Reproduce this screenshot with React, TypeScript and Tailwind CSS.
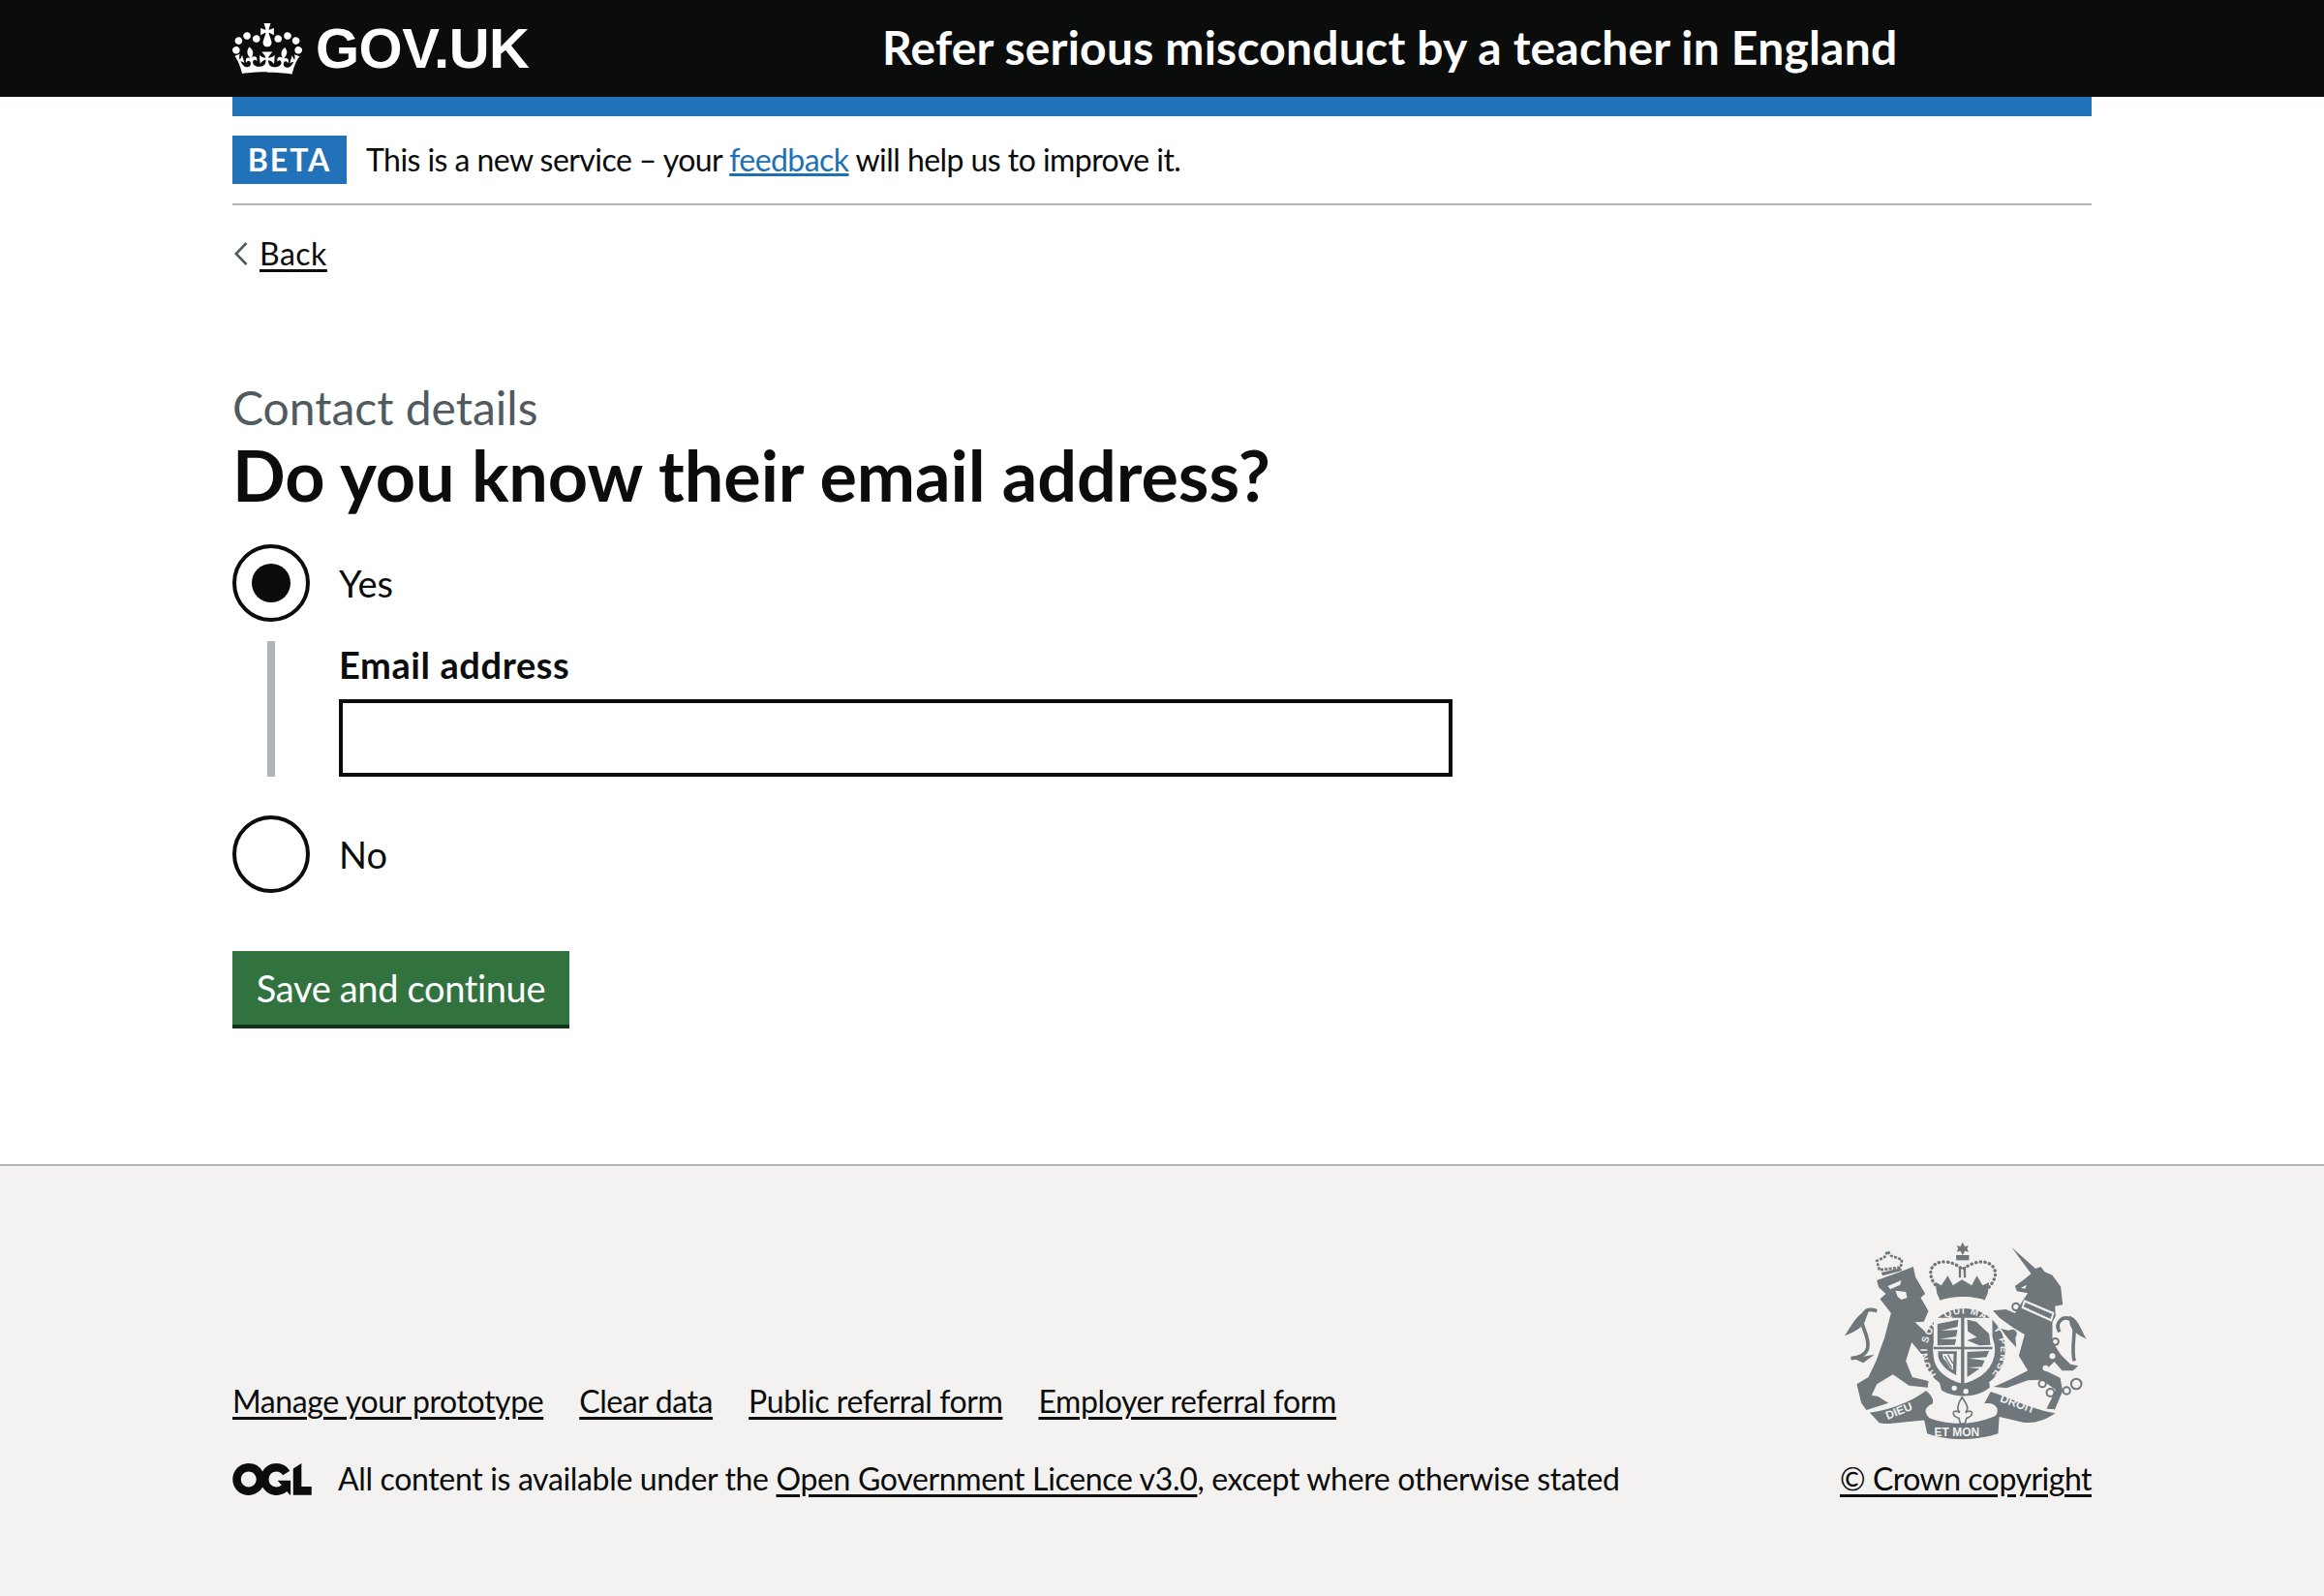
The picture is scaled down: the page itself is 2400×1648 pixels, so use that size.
const font = "font-['Lato',sans-serif]"

// ── Logos ─────────────────────────────────────────────────────────────────────
function Crown() {
  return (
    <svg viewBox="0 0 132 97" className="h-[53px] w-[72px] text-white" fill="currentColor">
      <path
        fillRule="evenodd"
        d="M25 30.2c3.5 1.5 7.7-.2 9.1-3.7 1.5-3.6-.2-7.8-3.9-9.2-3.6-1.4-7.6.3-9.1 3.9-1.4 3.5.3 7.5 3.9 9zM9 39.5c3.6 1.5 7.8-.2 9.2-3.7 1.5-3.6-.2-7.8-3.9-9.1-3.6-1.5-7.6.2-9.1 3.8-1.4 3.5.3 7.5 3.8 9zM4.4 57.2c3.5 1.5 7.7-.2 9.1-3.8 1.5-3.6-.2-7.7-3.9-9.1-3.5-1.5-7.6.3-9.1 3.8-1.4 3.5.3 7.6 3.9 9.1zm38.3-21.4c3.5 1.5 7.7-.2 9.1-3.8 1.5-3.6-.2-7.7-3.9-9.1-3.6-1.5-7.6.3-9.1 3.8-1.3 3.6.4 7.7 3.9 9.1zm64.4-5.6c-3.6 1.5-7.8-.2-9.1-3.7-1.5-3.6.2-7.8 3.8-9.2 3.6-1.4 7.7.3 9.2 3.9 1.3 3.5-.4 7.5-3.9 9zm15.9 9.3c-3.6 1.5-7.7-.2-9.1-3.7-1.5-3.6.2-7.8 3.7-9.1 3.6-1.5 7.7.2 9.2 3.8 1.5 3.5-.3 7.5-3.8 9zm4.7 17.7c-3.6 1.5-7.8-.2-9.2-3.8-1.5-3.6.2-7.7 3.9-9.1 3.6-1.5 7.7.3 9.2 3.8 1.3 3.5-.4 7.6-3.9 9.1zM89.3 35.8c-3.6 1.5-7.8-.2-9.2-3.8-1.4-3.6.2-7.7 3.9-9.1 3.6-1.5 7.7.3 9.2 3.8 1.4 3.6-.3 7.7-3.9 9.1zM69.7 17.7l8.9 4.7V9.3l-8.9 2.8c-.2-.3-.5-.6-.9-.9L72.4 0H59.6l3.6 11.2c-.3.3-.6.5-.9.9l-8.8-2.8v13.1l8.8-4.7c.3.3.6.7.9.9l-5 15.4v.1c-.2.8-.4 1.6-.4 2.4 0 4.1 3.1 7.5 7 8.1h.2c.3 0 .7.1 1 .1.4 0 .7 0 1-.1h.2c4-.6 7.1-4.1 7.1-8.1 0-.8-.1-1.7-.4-2.4V34l-5.1-15.4c.4-.2.7-.6 1-.9zM66 92.8c16.9 0 32.8 1.1 47.1 3.2 4-16.9 8.9-26.7 14-33.5l-9.6-3.4c1 4.9 1.1 7.2 0 10.2-1.5-1.4-3-4.3-4.2-8.7L108.6 76c2.8-2 5-3.2 7.5-3.3-4.4 9.4-10 11.9-13.6 11.2-4.3-.8-6.3-4.6-5.6-7.9 1-4.7 5.7-5.9 8-.5 4.3-8.7-3-11.4-7.6-8.8 7.1-7.2 7.9-13.5 2.1-21.1-8 6.1-8.1 12.3-4.5 20.8-4.7-5.4-12.1-2.5-9.5 6.2 3.4-5.2 7.9-2 7.2 3.1-.6 4.3-6.4 7.8-13.5 7.2-10.3-.9-10.9-8-11.2-13 2.5-.5 7.1 1.8 11 7.3L80.2 60c-4.1 4.4-8 5.3-12.3 5.4 1.4-4.4 8-11.6 8-11.6H55.5s6.4 7.2 7.9 11.6c-4.2-.1-8-1-12.3-5.4l1.4 16.4c3.9-5.5 8.5-7.7 10.9-7.3-.3 5-.7 12.1-11 13-7.2.6-12.9-2.9-13.5-7.2-.7-5 3.8-8.3 7.1-3.1 2.7-8.7-4.6-11.6-9.4-6.2 3.7-8.5 3.6-14.7-4.6-20.8-5.8 7.6-5 13.9 2.2 21.1-4.7-2.6-11.9.1-7.7 8.8 2.3-5.5 7.1-4.2 8.1.5.7 3.3-1.3 7.1-5.7 7.9-3.5.7-9-1.8-13.5-11.2 2.5.1 4.7 1.3 7.5 3.3l-4.7-15.4c-1.2 4.4-2.7 7.2-4.3 8.7-1.1-3-.9-5.3 0-10.2l-9.5 3.4c5 6.9 9.9 16.7 14 33.5 14.8-2.1 30.8-3.2 47.7-3.2z"
      />
    </svg>
  )
}

function OglLogo() {
  return (
    <svg viewBox="0 0 483.2 195.7" className="h-[33px] w-[82px] shrink-0 text-[#0b0c0c]" fill="currentColor">
      <path d="M421.5 142.8V.1l-50.7 32.3v161.1h112.4v-50.7zm-122.3-9.6A47.12 47.12 0 0 1 221 97.8c0-26 21.1-47.1 47.1-47.1 16.7 0 31.4 8.7 39.7 21.8l42.7-27.2A97.63 97.63 0 0 0 268.1 0c-36.5 0-68.3 20.1-85.1 49.7A98 98 0 0 0 97.8 0C43.9 0 0 43.9 0 97.8s43.9 97.8 97.8 97.8c36.5 0 68.3-20.1 85.1-49.7a97.76 97.76 0 0 0 149.6 25.4l19.4 22.2h3v-87.8h-80l24.3 27.5zM97.8 145c-26 0-47.1-21.1-47.1-47.1s21.1-47.1 47.1-47.1 47.2 21 47.2 47S123.8 145 97.8 145" />
    </svg>
  )
}

// Royal arms, drawn in the coordinates of a 900px square around the crest
function Crest() {
  const ink = '#6f777b'
  const bg = '#f3f2f1'
  return (
    <svg viewBox="70 70 755 615" className="mr-[4px] h-[205px] w-[252px]" fill={ink}>
      {/* lion */}
      <path d="M172 190 L240 165 L285 148 L292 180 L322 232 L308 244 L332 285 L318 318 L290 320 L325 352 L342 392 L346 430 L312 420 L280 382 L262 440 L282 490 L332 502 L330 522 L272 516 L222 482 L172 512 L156 546 L176 550 L208 570 L140 592 L124 570 L110 512 L146 490 L170 440 L196 368 L216 292 L182 248 L200 232 L178 212 Z" />
      <path d="M206 208 L248 190 L244 204 L214 218 Z M230 222 L262 226 L266 244 L248 250 L236 240 Z" fill={bg} />
      {/* lion tail */}
      <path d="M172 285 C130 270 118 305 132 340 C150 385 158 425 92 432" fill="none" stroke={ink} strokeWidth="11" />
      <path d="M148 282 C110 290 92 335 72 362 C100 350 125 340 135 318 Z M90 428 L130 446 L165 420 L130 426 Z" />
      {/* lion crown */}
      <path d="M180 158 L172 130 L196 118 L206 100 L216 114 L250 126 L246 150 Z" fill="none" stroke={ink} strokeWidth="8" strokeDasharray="9 4" />
      <path d="M186 166 L246 152 L250 160 L190 176 Z" />

      {/* crown */}
      <path d="M438 72 L445 86 L456 82 L452 92 L456 102 L445 99 L438 112 L431 99 L420 102 L424 92 L420 82 L431 86 Z" />
      <path d="M418 112 H458 V128 H418 Z" />
      <path
        d="M362 215 C320 170 340 130 385 133 C410 135 425 146 438 156 C452 146 470 135 492 133 C535 130 560 170 516 215"
        fill="none"
        stroke={ink}
        strokeWidth="10"
        strokeDasharray="1 13"
        strokeLinecap="round"
      />
      <path d="M426 148 H433 V182 H426 Z M441 148 H448 V182 H441 Z" />
      <path d="M358 230 L354 196 L372 206 L392 176 L408 206 L436 188 L466 206 L482 176 L500 206 L520 196 L516 230 L506 252 C460 238 414 238 368 252 Z" />
      <path d="M374 250 C415 238 462 238 504 250 L500 270 C460 256 416 256 376 270 Z" fill={bg} />

      {/* garter and shield */}
      <circle cx="442" cy="405" r="128" />
      <circle cx="442" cy="405" r="96" fill={bg} />
      <path d="M348 306 H530 V420 C530 468 486 500 438 510 C392 500 348 468 348 420 Z" fill={bg} />
      <path d="M433 300 H443 V512 H433 Z M348 396 H530 V404 H348 Z" />
      <path d="M360 325 L425 312 L422 334 L372 346 L422 344 L418 364 L366 372 L418 372 L414 390 L360 392 Z" />
      <path d="M452 312 L480 318 L520 356 L524 390 L490 392 L452 376 L482 366 L454 348 Z" />
      <path d="M452 412 L520 408 L512 428 L456 432 L506 438 L498 458 L454 460 L490 464 L452 490 Z" />
      <path d="M362 410 H420 L418 484 C388 470 366 448 362 425 Z" />
      <path d="M376 418 L410 418 L408 468 C392 458 380 440 376 425 Z" fill={bg} />
      <path d="M382 424 L404 462 M392 420 L408 448 M380 436 L396 458" stroke={ink} strokeWidth="4" fill="none" />
      <defs>
        <path id="garter" d="M 356 482 A 114 114 0 1 1 528 482" />
      </defs>
      <text fontFamily="'Liberation Sans', sans-serif" fontWeight="700" fontSize="30" fill={bg} textLength="520">
        <textPath href="#garter">HONI SOIT QUI MAL Y PENSE</textPath>
      </text>
      <path d="M366 505 C410 535 480 535 520 505 L522 522 C480 556 410 556 372 530 Z" />
      <circle cx="412" cy="524" r="8" fill={bg} />
      <circle cx="448" cy="534" r="8" fill={bg} />

      {/* unicorn */}
      <path d="M590 88 L664 154 L680 148 L692 164 L716 174 L742 210 L748 266 L724 270 L726 300 L716 320 L716 380 L742 420 L772 450 L796 455 L780 470 L746 470 L722 442 L694 470 L740 492 L748 532 L724 590 L698 588 L726 530 L684 498 L640 500 L574 524 L534 520 L580 500 L640 470 L612 424 L630 358 L596 338 L552 306 L532 284 L572 280 L600 292 L626 250 L640 230 L606 224 L600 208 L628 188 L650 170 Z" />
      <path d="M628 250 L722 290 L714 318 L620 276 Z" fill={bg} />
      <path d="M632 258 L716 294 L710 310 L626 272 Z" strokeDasharray="5 4" stroke={bg} strokeWidth="2" />
      <path d="M556 340 L600 350 L604 398 L580 372 Z" />
      <path d="M738 350 C722 320 748 300 770 310 C800 325 770 390 784 440" fill="none" stroke={ink} strokeWidth="11" />
      <path d="M768 300 C795 305 805 345 822 372 C795 360 775 345 770 325 Z" />
      <g fill="none" stroke={ink} strokeWidth="6">
        <circle cx="603" cy="272" r="11" />
        <circle cx="592" cy="356" r="11" />
        <circle cx="725" cy="380" r="10" />
        <circle cx="685" cy="510" r="11" />
        <circle cx="710" cy="538" r="12" />
        <circle cx="760" cy="532" r="11" />
        <circle cx="790" cy="511" r="16" />
      </g>
      <circle cx="716" cy="425" r="9" fill={bg} />
      <circle cx="695" cy="462" r="9" fill={bg} />
      <path d="M618 214 L636 204 L632 216 Z" fill={bg} />

      {/* motto ribbon */}
      <path d="M150 600 C220 590 270 570 325 532 C340 545 350 560 345 572 C315 585 318 605 342 622 C270 625 205 640 180 632 Z" />
      <path d="M525 535 C590 555 650 590 725 602 C690 625 660 635 625 630 L540 610 C555 590 540 565 505 572 Z" />
      <path d="M316 610 C390 642 480 642 552 604 L548 665 C480 688 390 688 328 665 Z" />
      <g fontFamily="'Liberation Sans', sans-serif" fontWeight="700" fontSize="36" fill={bg}>
        <text x="205" y="622" transform="rotate(-22 205 622)">DIEU</text>
        <text x="350" y="672">ET MON</text>
        <text x="552" y="565" transform="rotate(20 552 565)">DROIT</text>
      </g>
      {/* fleur-de-lis */}
      <path d="M436 552 C456 580 456 590 447 600 C472 585 474 612 450 617 L445 634 H431 L426 617 C402 612 404 585 429 600 C420 590 420 580 436 552 Z" fill={bg} stroke={ink} strokeWidth="5" />
    </svg>
  )
}

// ── Form parts ───────────────────────────────────────────────────────────────
function Radio({ label, checked }: { label: string; checked?: boolean }) {
  return (
    <label className="flex items-center gap-[30px]">
      <span className="flex size-[80px] items-center justify-center rounded-full border-4 border-[#0b0c0c] bg-white">
        {checked && <span className="size-[40px] rounded-full bg-[#0b0c0c]" />}
      </span>
      <span className="text-[38px] leading-[50px] text-[#0b0c0c]">{label}</span>
    </label>
  )
}

const footerLinks = ['Manage your prototype', 'Clear data', 'Public referral form', 'Employer referral form']

// ── App ───────────────────────────────────────────────────────────────────────
export default function App() {
  return (
    <div className={`${font} flex min-h-[1648px] flex-col bg-white text-[#0b0c0c]`}>
      <header className="h-[100px] bg-[#0b0c0c] text-white">
        <div className="mx-[240px] flex h-full items-center">
          <div className="flex w-[671px] items-center gap-[14px]">
            <Crown />
            <span className="font-['Liberation_Sans',sans-serif] text-[58px] leading-none font-bold tracking-[-0.5px]">
              GOV.UK
            </span>
          </div>
          <span className="pb-[2px] text-[48px] leading-none font-bold tracking-[0.2px]">
            Refer serious misconduct by a teacher in England
          </span>
        </div>
      </header>

      <div className="mx-[240px]">
        <div className="h-[20px] bg-[#2172b8]" />
        <div className="flex items-center gap-[20px] border-b-2 border-[#b1b4b6] py-[20px]">
          <strong className="flex h-[50px] w-[118px] items-center justify-center bg-[#2172b8] text-[32px] font-bold tracking-[2px] text-white">
            BETA
          </strong>
          <p className="text-[32px] leading-[50px] tracking-[-0.55px]">
            This is a new service – your <a className="text-[#1d70b8] underline">feedback</a> will help us to improve it.
          </p>
        </div>

        <a className="mt-[30px] flex items-center gap-[12px] text-[32px] leading-[40px] tracking-[0.5px]">
          <svg viewBox="0 0 14 24" className="ml-[2px] h-[24px] w-[14px]" fill="none" stroke="#505a5f" strokeWidth="2.6">
            <path d="M12.5 1 1.8 12l10.7 11" />
          </svg>
          <span className="underline underline-offset-4">Back</span>
        </a>

        <main className="pt-[110px]">
          <p className="text-[48px] leading-[58px] text-[#505a5f]">Contact details</p>
          <h1 className="text-[72px] leading-[80px] font-bold tracking-[-0.1px]">Do you know their email address?</h1>

          <div className="mt-[32px]">
            <Radio label="Yes" checked />
            <div className="mt-[20px] ml-[36px] flex h-[140px] border-l-8 border-[#b1b4b6] pl-[66px]">
              <div className="flex w-[1150px] flex-col">
                <label className="-mt-[1px] text-[38px] leading-[50px] font-bold tracking-[0.6px]">Email address</label>
                <input className="mt-auto h-[80px] w-full border-4 border-[#0b0c0c] bg-white" />
              </div>
            </div>
            <div className="mt-[40px]">
              <Radio label="No" />
            </div>
          </div>

          <button className="mt-[60px] h-[76px] w-[348px] bg-[#31723f] text-center text-[38px] leading-none tracking-[-0.35px] text-white shadow-[0_4px_0_#13341c]">
            Save and continue
          </button>
        </main>
      </div>

      <footer className="mt-[144px] flex-1 border-t-2 border-[#b1b4b6] bg-[#f3f2f1]">
        <div className="mx-[240px] flex items-end justify-between pt-[78px]">
          <div className="mb-[8px]">
            <ul className="flex gap-[37px] text-[32px] leading-[40px] tracking-[-0.4px]">
              {footerLinks.map(link => (
                <li key={link}>
                  <a className="underline underline-offset-4">{link}</a>
                </li>
              ))}
            </ul>
            <div className="mt-[40px] flex items-center gap-[27px] text-[32px] leading-[40px] tracking-[-0.34px]">
              <OglLogo />
              <span>
                All content is available under the <a className="underline underline-offset-4">Open Government Licence v3.0</a>, except where otherwise stated
              </span>
            </div>
          </div>
          <div className="mb-[8px] flex flex-col items-end gap-[20px]">
            <Crest />
            <a className="text-[32px] leading-[40px] tracking-[-0.5px] underline underline-offset-4">© Crown copyright</a>
          </div>
        </div>
      </footer>
    </div>
  )
}
